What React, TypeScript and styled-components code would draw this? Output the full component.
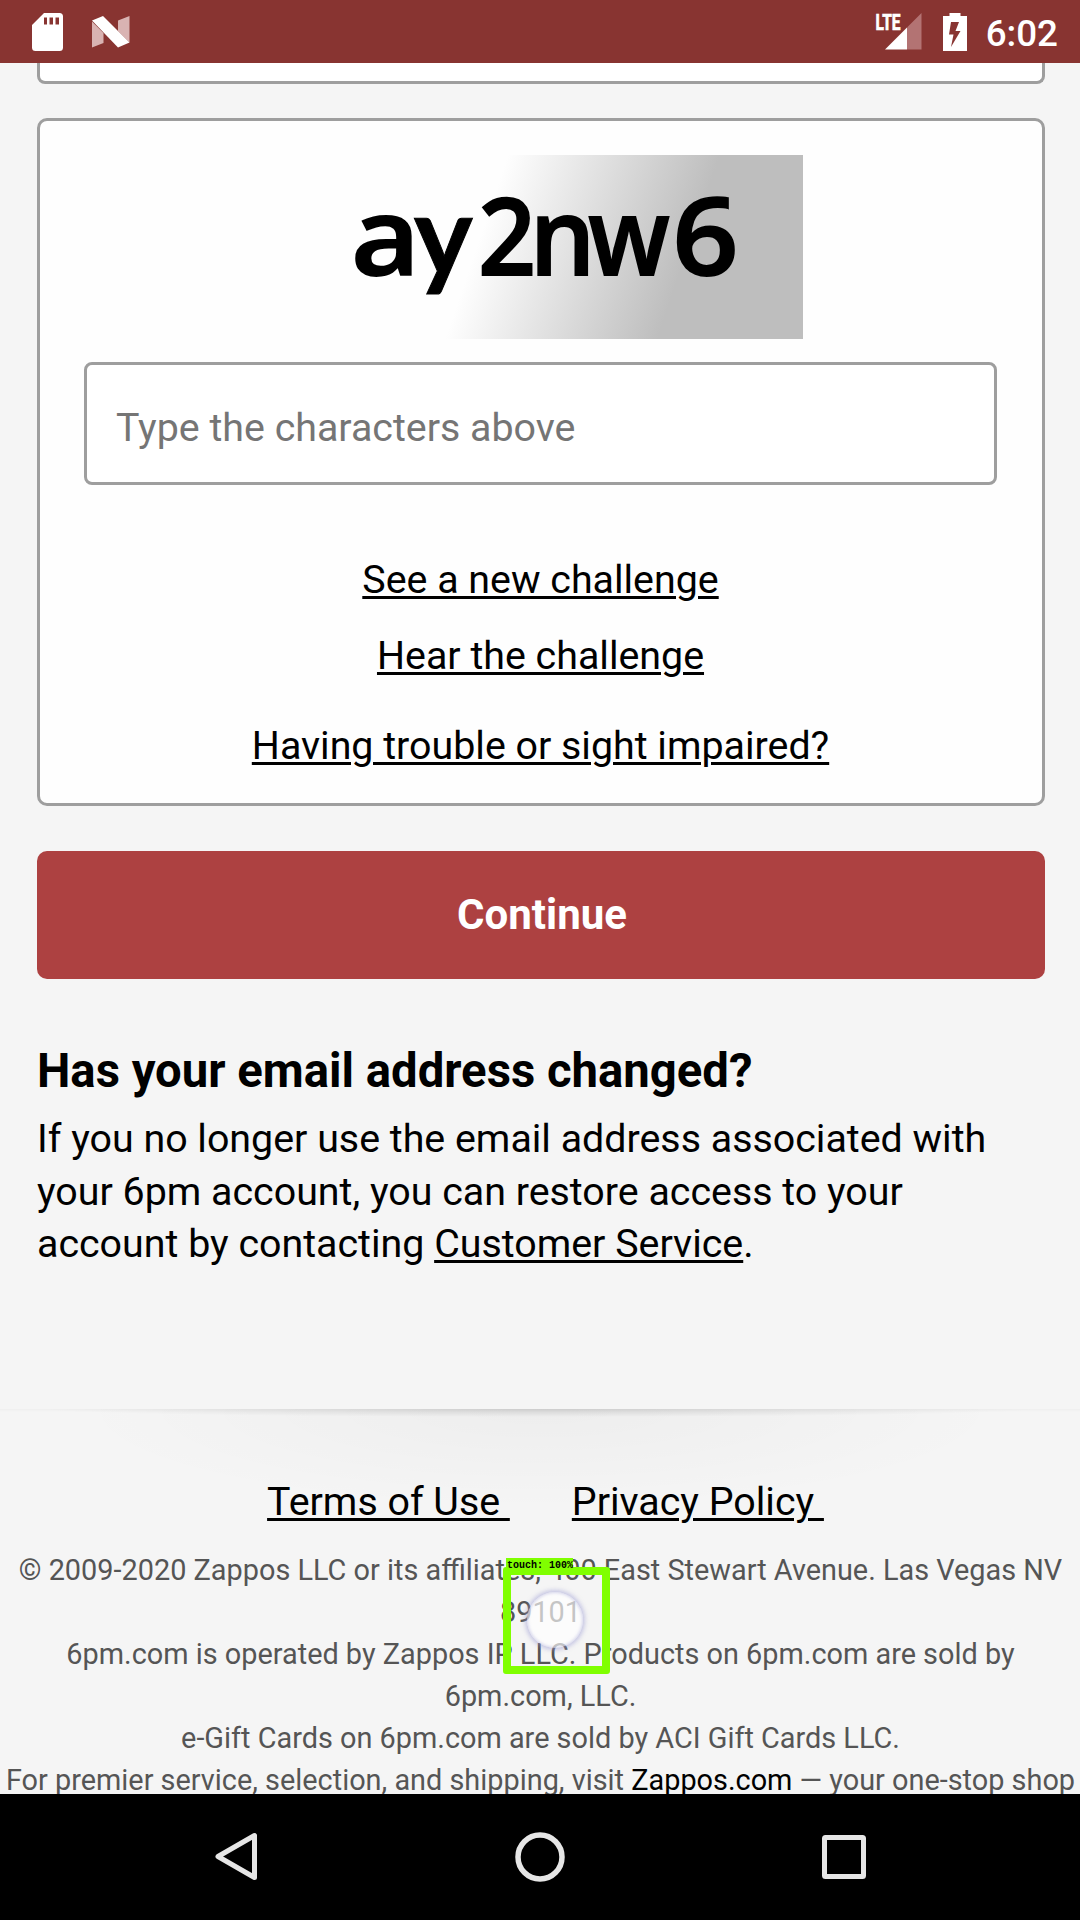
import React from "react";
import styled, { createGlobalStyle } from "styled-components";

const GlobalStyle = createGlobalStyle`
  *, *::before, *::after { box-sizing: border-box; }
  body { margin: 0; background: #f5f5f5; font-family: Roboto, "Liberation Sans", sans-serif; color: #000; }
`;

const Screen = styled.div`
  position: relative;
  display: flex;
  flex-direction: column;
  width: 1080px;
  height: 1920px;
  overflow: hidden;
`;

const StatusBar = styled.header`
  flex: none;
  display: flex;
  align-items: center;
  justify-content: space-between;
  height: 63px;
  padding: 0 22px 0 32px;
  background: #883431;
`;

const StatusGroup = styled.div`
  display: flex;
  align-items: center;
`;

const Icon = styled.svg<{ $gap?: number }>`
  display: block;
  flex: none;
  overflow: visible;
  margin-right: ${(p) => p.$gap ?? 0}px;
`;

const NetworkLabel = styled.text`
  font-family: Roboto, sans-serif;
  font-size: 21.5px;
  font-weight: 700;
  fill: #fff;
  stroke: #fff;
  stroke-width: 0.7px;
`;

const Clock = styled.time`
  padding-top: 3px;
  color: #fff;
  font-size: 36.75px;
  font-weight: 500;
  line-height: 43px;
`;

const Page = styled.main`
  flex: 1;
  min-height: 0;
  display: flex;
  flex-direction: column;
  overflow: hidden;
  background: #f5f5f5;
`;

const Form = styled.section`
  flex: none;
  display: flex;
  flex-direction: column;
  height: 1346px;
  padding: 0 35px 0 37px;
`;

const PreviousField = styled.div`
  flex: none;
  height: 21px;
  border: 3px solid #9e9e9e;
  border-top: 0;
  border-radius: 0 0 8px 8px;
  background: #fff;
`;

const CaptchaCard = styled.div`
  flex: none;
  display: flex;
  flex-direction: column;
  align-items: center;
  height: 688px;
  margin-top: 34px;
  padding: 34px 45px 0 44px;
  border: 3px solid #9e9e9e;
  border-radius: 10px;
  background: #fefefe;
`;

const CaptchaImage = styled.svg`
  display: block;
  flex: none;
`;

const CaptchaText = styled.text`
  font-family: "Open Sans", "Noto Sans", sans-serif;
  font-size: 107px;
  font-weight: 600;
  fill: #000;
  stroke: #000;
  stroke-width: 1.8px;
`;

const LatoGlyph = styled.tspan`
  font-family: Lato, sans-serif;
  font-size: 111px;
  font-weight: 700;
  stroke-width: 1px;
`;

const CaptchaInput = styled.input`
  flex: none;
  align-self: stretch;
  height: 123px;
  margin-top: 23px;
  padding: 7px 29px 0;
  border: 3px solid #9e9e9e;
  border-radius: 8px;
  background: #fff;
  font: 400 39.375px Roboto, sans-serif;
  outline: none;
  &::placeholder { color: #757575; opacity: 1; }
`;

const Link = styled.a`
  color: #000;
  text-decoration: underline;
  text-decoration-thickness: 3px;
  text-underline-offset: 3px;
  white-space: pre;
`;

const ChallengeLink = styled(Link)<{ $top: number }>`
  margin-top: ${(p) => p.$top}px;
  font-size: 39.375px;
  line-height: 52px;
`;

const ContinueButton = styled.button`
  flex: none;
  height: 128px;
  margin-top: 45px;
  padding: 0 0 1px 2px;
  border: 0;
  border-radius: 10px;
  background: #ad4141;
  color: #fff;
  font: 700 42px Roboto, sans-serif;
`;

const Heading = styled.h2`
  margin: 61px 0 0;
  font-size: 47.25px;
  font-weight: 700;
  line-height: 63px;
`;

const Paragraph = styled.p`
  margin: 10px 0 0;
  font-size: 39.375px;
  line-height: 52.5px;
  white-space: nowrap;
`;

const Footer = styled.footer`
  flex: none;
  display: flex;
  flex-direction: column;
  align-items: center;
  padding-top: 67px;
  background:
    radial-gradient(ellipse 500px 8px at 50% 0, rgba(0, 0, 0, 0.12), rgba(0, 0, 0, 0)) no-repeat,
    radial-gradient(ellipse 470px 100px at 50% 0, rgba(0, 0, 0, 0.032), rgba(0, 0, 0, 0)) no-repeat,
    linear-gradient(#efefef, #f5f5f5 3px, #f5f5f5);
`;

const FooterLinks = styled.nav`
  display: flex;
  gap: 62px;
  padding-left: 11px;
  font-size: 39.375px;
  line-height: 52px;
`;

const Legal = styled.div`
  display: flex;
  flex-direction: column;
  align-items: center;
  margin-top: 21px;
  padding-left: 1px;
  color: #555;
  font-size: 28.875px;
  line-height: 42px;
  white-space: nowrap;
`;

const StoreLink = styled.a`
  color: #000;
`;

const NavBar = styled.nav`
  flex: none;
  display: flex;
  align-items: center;
  justify-content: space-between;
  height: 126px;
  padding: 0 210px;
  background: #000;
`;

const TouchDot = styled.div`
  position: absolute;
  left: 527px;
  top: 1592px;
  width: 56px;
  height: 56px;
  border-radius: 50%;
  background: rgba(255, 255, 255, 0.66);
  box-shadow: 0 0 4px 2px rgba(150, 150, 210, 0.5), inset 0 0 3px 1px rgba(150, 150, 210, 0.35);
`;

const TouchFrame = styled.div`
  position: absolute;
  left: 503px;
  top: 1567px;
  width: 107px;
  height: 107px;
  border: 8px solid #80ff00;
  border-radius: 3px;
`;

const TouchLabel = styled.div`
  position: absolute;
  left: 506px;
  top: 1558px;
  width: 67px;
  height: 13px;
  padding-left: 1px;
  background: #80ff00;
  color: #000;
  font: 700 10px/16px "Liberation Mono", monospace;
  white-space: pre;
`;

const SdCardIcon = () => (
  <Icon $gap={29} width="31" height="38" viewBox="0 0 31 38">
    <path
      fill="#fff"
      fillRule="evenodd"
      d="M12 0H27.500Q31 0 31 3.500V34.500Q31 38 27.500 38H3.500Q0 38 0 34.500V12ZM12 4.500V11.500H15V4.500ZM17.500 4.500V11.500H21V4.500ZM23.500 4.500V11.500H27V4.500Z"
    />
  </Icon>
);

const NougatIcon = () => (
  <Icon width="38" height="32" viewBox="0 0 38 32">
    <path fill="#d9b3b2" d="M0 5.500 11.500 17V27L0 31.500ZM26 4.500 37.500 0V26.500L26 15Z" />
    <path fill="#fff" d="M0 4.500 11 0 37.500 26.500 26 31.500Z" />
  </Icon>
);

const SignalIcon = () => (
  <Icon $gap={21.5} width="46" height="37" viewBox="0 0 46 37">
    <path fill="#b37373" d="M31 14.500 45.500 0V36.500H31Z" />
    <path fill="#fff" d="M9 36.500 31 14.500V36.500Z" />
    <NetworkLabel x="-0.500" y="16.500" textLength="25" lengthAdjust="spacingAndGlyphs">LTE</NetworkLabel>
  </Icon>
);

const BatteryIcon = () => (
  <Icon $gap={18.5} width="24" height="38" viewBox="0 0 24 38">
    <path
      fill="#fff"
      fillRule="evenodd"
      d="M6.500 0H17.500V3H24V38H0V3H6.500ZM8 9 6 21.500H10.500L8 34 17.500 18H12.500L16 9Z"
    />
  </Icon>
);

export default function App() {
  return (
    <>
      <GlobalStyle />
      <Screen>
        <StatusBar>
          <StatusGroup>
            <SdCardIcon />
            <NougatIcon />
          </StatusGroup>
          <StatusGroup>
            <SignalIcon />
            <BatteryIcon />
            <Clock>6:02</Clock>
          </StatusGroup>
        </StatusBar>

        <Page>
          <Form>
            <PreviousField />
            <CaptchaCard>
              <CaptchaImage width="525" height="184" viewBox="0 0 525 184">
                <defs>
                  <linearGradient id="captchaFade" gradientUnits="userSpaceOnUse" x1="230" y1="0" x2="420" y2="65">
                    <stop offset="0" stopColor="#fefefe" />
                    <stop offset="1" stopColor="#bebebe" />
                  </linearGradient>
                </defs>
                <rect width="525" height="184" fill="url(#captchaFade)" />
                <CaptchaText y="120">
                  <tspan x="73" textLength="69" lengthAdjust="spacingAndGlyphs">a</tspan>
                  <LatoGlyph x="136">y</LatoGlyph>
                  <tspan x="200" textLength="58" lengthAdjust="spacingAndGlyphs">2</tspan>
                  <tspan x="251.700" textLength="65.500" lengthAdjust="spacingAndGlyphs">n</tspan>
                  <tspan x="310.300" textLength="81.500" lengthAdjust="spacingAndGlyphs">w</tspan>
                  <tspan x="394.500" textLength="66" lengthAdjust="spacingAndGlyphs">6</tspan>
                </CaptchaText>
              </CaptchaImage>
              <CaptchaInput placeholder="Type the characters above" />
              <ChallengeLink $top={68.5}>See a new challenge</ChallengeLink>
              <ChallengeLink $top={24}>Hear the challenge</ChallengeLink>
              <ChallengeLink $top={38}>Having trouble or sight impaired?</ChallengeLink>
            </CaptchaCard>
            <ContinueButton>Continue</ContinueButton>
            <Heading>Has your email address changed?</Heading>
            <Paragraph>
              If you no longer use the email address associated with
              <br />
              your 6pm account, you can restore access to your
              <br />
              account by contacting <Link>Customer Service</Link>.
            </Paragraph>
          </Form>

          <Footer>
            <FooterLinks>
              <Link>{"Terms of Use "}</Link>
              <Link>{"Privacy Policy "}</Link>
            </FooterLinks>
            <Legal>
              <span>© 2009-2020 Zappos LLC or its affiliates, 400 East Stewart Avenue. Las Vegas NV</span>
              <span>89101</span>
              <span>6pm.com is operated by Zappos IP LLC. Products on 6pm.com are sold by</span>
              <span>6pm.com, LLC.</span>
              <span>e-Gift Cards on 6pm.com are sold by ACI Gift Cards LLC.</span>
              <span>
                For premier service, selection, and shipping, visit <StoreLink>Zappos.com</StoreLink> — your one-stop shop
              </span>
            </Legal>
          </Footer>
        </Page>

        <NavBar>
          <Icon width="52" height="52" viewBox="0 0 52 52">
            <path d="M44.500 4.500V46.500L8 25.500Z" fill="none" stroke="#e6e6e6" strokeWidth="5" strokeLinejoin="round" />
          </Icon>
          <Icon width="52" height="52" viewBox="0 0 52 52">
            <circle cx="26" cy="26" r="22" fill="none" stroke="#e6e6e6" strokeWidth="5.500" />
          </Icon>
          <Icon width="52" height="52" viewBox="0 0 52 52">
            <rect x="6.500" y="6.500" width="39" height="39" rx="1" fill="none" stroke="#e6e6e6" strokeWidth="5" />
          </Icon>
        </NavBar>

        <TouchDot />
        <TouchFrame />
        <TouchLabel>touch: 100%</TouchLabel>
      </Screen>
    </>
  );
}
